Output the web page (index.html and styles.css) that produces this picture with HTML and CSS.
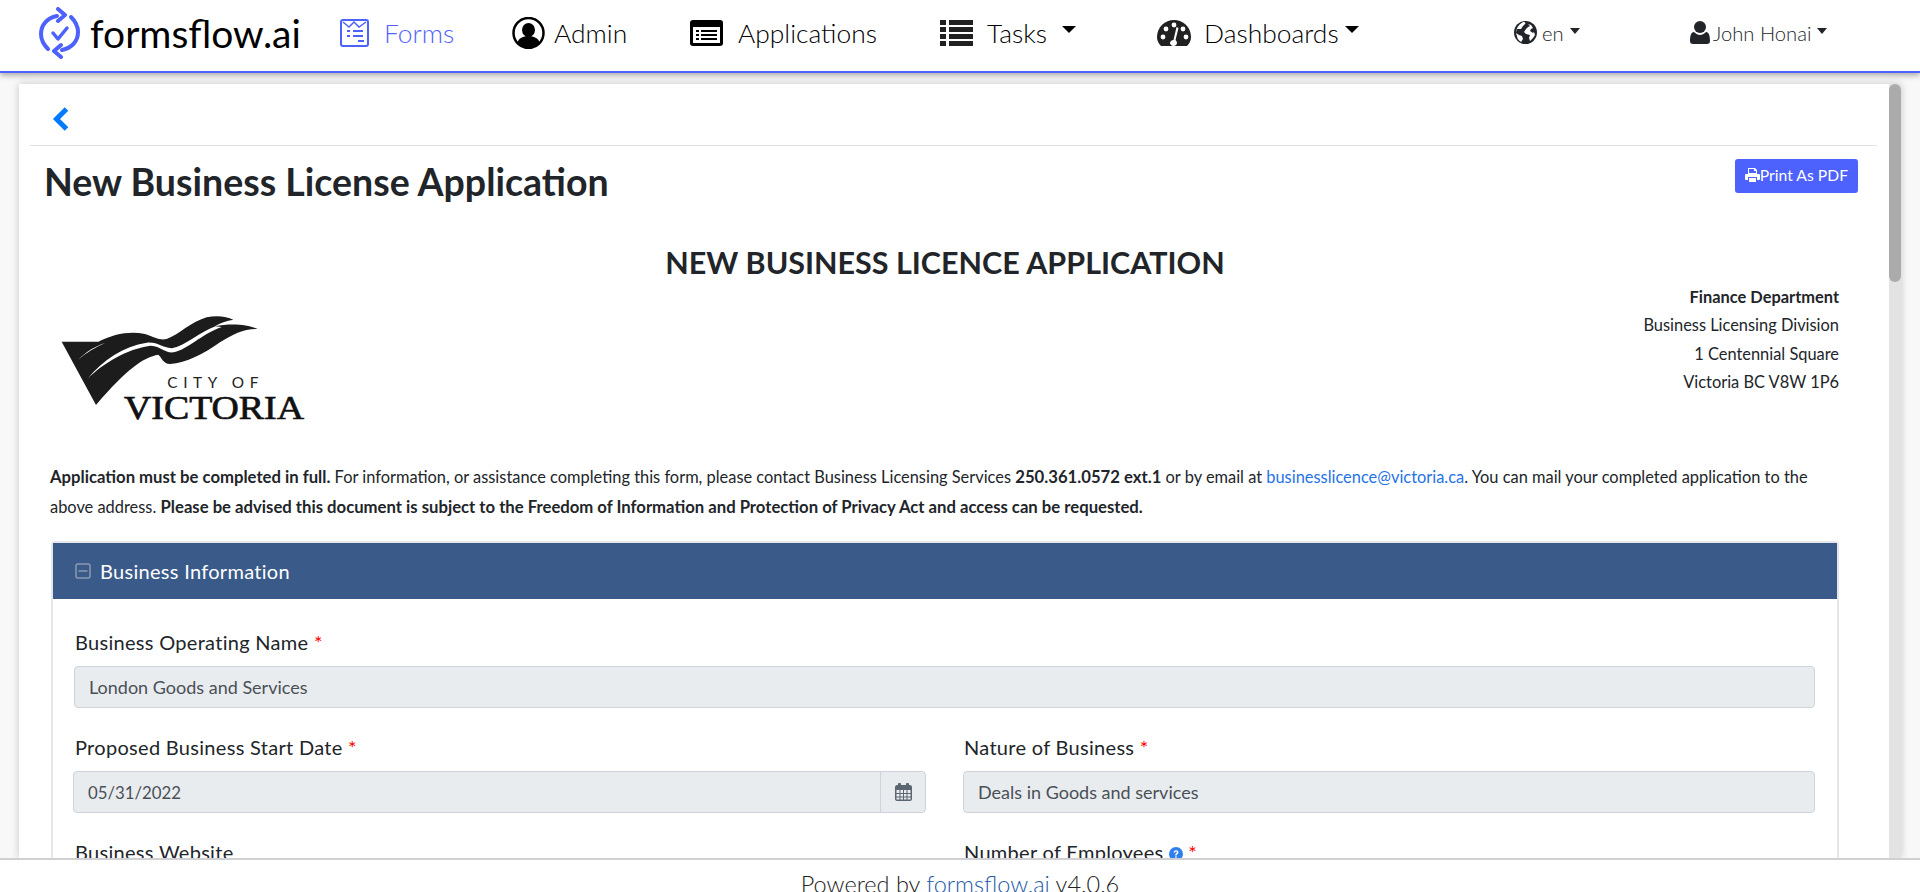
FILE: index.html
```html
<!DOCTYPE html>
<html lang="en">
<head>
  <meta charset="UTF-8">
  <meta name="viewport" content="width=device-width, initial-scale=1">
  <title>New Business License Application</title>
  <link rel="stylesheet" href="styles.css">
</head>
<body>
<div class="page">

  <header class="topbar">
    <a class="brand">
      <svg class="brand-icon" viewBox="0 0 43 52" fill="none" stroke="#4d61fc" stroke-width="4" stroke-linecap="round" stroke-linejoin="round">
        <path d="M19 9C9 11 3 18 3 27c0 6 3 11 7 15"/>
        <path d="M20 2l7 6-7 6" />
        <path d="M24 43c10-2 16-9 16-18 0-6-3-11-7-15"/>
        <path d="M23 50l-7-6 7-6" />
        <path d="M15 26l5 6 9-11" stroke-width="3.5"/>
      </svg>
      <span>formsflow.ai</span>
    </a>

    <a class="nav-item nav-active gap-forms">
      <svg class="ic-forms" viewBox="0 0 29 28" fill="none" stroke="#4d61fc" stroke-width="2">
        <rect x="1" y="1" width="27" height="26" rx="2"/>
        <path d="M3 3l6 5 5-5 5 5 7-5" stroke-width="1.5"/>
        <path d="M7 12h3M13 12h10M7 17h3M13 17h10M18 22h6" stroke-width="2"/>
      </svg>
      <span>Forms</span>
    </a>

    <a class="nav-item gap-admin">
      <svg class="ic-admin" viewBox="0 0 33 32">
        <ellipse cx="16.500" cy="16" rx="15" ry="15" fill="#fff" stroke="#000" stroke-width="2.500"/>
        <ellipse cx="16.500" cy="13" rx="6.500" ry="7"/>
        <path d="M5 26c2-5 6-7 11.500-7S26 21 28 26c-3 3-7 5-11.500 5S8 29 5 26z"/>
      </svg>
      <span>Admin</span>
    </a>

    <a class="nav-item gap-apps">
      <svg class="ic-apps" viewBox="0 0 33 26">
        <rect x="0" y="0" width="33" height="26" rx="3"/>
        <rect x="3" y="7" width="27" height="16" fill="#fff"/>
        <path d="M6 10h3v2H6zM11 10h16v2H11zM6 14h3v2H6zM11 14h16v2H11zM6 18h3v2H6zM11 18h16v2H11z"/>
      </svg>
      <span>Applications</span>
    </a>

    <a class="nav-item gap-tasks">
      <svg class="ic-tasks" viewBox="0 0 33 26" fill="#212121">
        <path d="M0 0h6v5H0zM9 0h24v5H9zM0 7h6v5H0zM9 7h24v5H9zM0 14h6v5H0zM9 14h24v5H9zM0 21h6v5H0zM9 21h24v5H9z"/>
      </svg>
      <span>Tasks</span>
      <i class="caret caret-big caret-tasks"></i>
    </a>

    <a class="nav-item gap-dash">
      <svg class="ic-dash" viewBox="0 0 34 26">
        <path d="M4 26C1 23 0 20 0 17 0 7 8 0 17 0s17 7 17 17c0 3-1 6-4 9z" fill="#212121"/>
        <circle cx="6" cy="17" r="2.400" fill="#fff"/>
        <circle cx="9" cy="9" r="2.400" fill="#fff"/>
        <circle cx="17" cy="5" r="2.400" fill="#fff"/>
        <circle cx="26" cy="9" r="2.400" fill="#fff"/>
        <circle cx="29" cy="17" r="2.400" fill="#fff"/>
        <path d="M19.500 7l2 1-3 12c1 1 1.500 2 1.500 3 0 1.500-1.500 3-3.500 3s-3.500-1.500-3.500-3 1.500-3 3.500-3z" fill="#fff"/>
      </svg>
      <span>Dashboards</span>
      <i class="caret caret-big"></i>
    </a>

    <a class="nav-item nav-small gap-lang">
      <svg class="ic-globe" viewBox="0 0 23 23">
        <circle cx="11.500" cy="11.500" r="11.500" fill="#212529"/>
        <path d="M9 1c2 0 3 1 2 2L9 5 7 8 3 8 2 12l3 2 3 1 1 3-2 3C4 19 3 17 3 15 1 12 2 5 9 1zM14 3l3 1 2 3-2 1-1 2 3 2 1-1 1 3-2 3-3 3-1-3 1-3-4-1-2-2 2-3 2-2 2-1z" fill="#fff"/>
      </svg>
      <span>en</span>
      <i class="caret"></i>
    </a>

    <a class="nav-item nav-small gap-user">
      <svg class="ic-user" viewBox="0 0 20 23" fill="#212529">
        <circle cx="10" cy="6" r="6"/>
        <path d="M0 20c0-5 1-9 4-9 2 2 4 3 6 3s4-1 6-3c3 0 4 4 4 9 0 2-1 3-3 3H3c-2 0-3-1-3-3z"/>
      </svg>
      <span>John Honai</span>
      <i class="caret"></i>
    </a>
  </header>

  <main class="main">
    <div class="card">
      <div class="content">
        <div class="back-row">
          <svg class="back-icon" viewBox="0 0 16 24" fill="none" stroke="#007bff" stroke-width="5">
            <path d="M14 2L4 12l10 10"/>
          </svg>
        </div>

        <div class="title-row">
          <h1>New Business License Application</h1>
          <button class="btn-print">
            <svg class="ic-print" viewBox="0 0 15 14" fill="#fff">
              <path d="M3 0h7l2 2v4H3zM4 1v4h7V3H9V1zM0 7c0-1 1-1 1-1h13s1 0 1 1v4c0 .5-.5 1-1 1h-2V9H3v3H1c-.5 0-1-.5-1-1zM4 10h7v4H4z"/>
            </svg>Print As PDF
          </button>
        </div>

        <div class="form-area">
          <h2>NEW BUSINESS LICENCE APPLICATION</h2>

          <div class="letterhead">
            <svg class="city-logo" viewBox="0 0 960 450">
              <path d="M95 158L205 158C250 135 300 125 345 135C375 145 390 155 410 150C450 135 480 100 530 85C560 78 590 82 610 92C590 95 570 102 555 112C600 102 655 106 683 120C640 120 610 135 570 160C520 195 470 222 420 225C400 225 395 205 385 197C340 205 290 240 198 348Z" fill="#1c1c1c"/>
              <path d="M172 270C220 222 290 180 362 170C395 172 405 194 432 190C475 180 510 138 575 114L556 112C510 128 465 172 425 178C395 176 385 158 350 161C280 172 220 212 172 270Z" fill="#fff"/>
              <path d="M145 212C170 190 195 176 225 162C195 172 168 188 145 212Z" fill="#fff"/>
              <text class="logo-city" x="412" y="298" textLength="273">CITY OF</text>
              <text class="logo-victoria" x="282" y="390" textLength="540" lengthAdjust="spacingAndGlyphs">VICTORIA</text>
            </svg>
            <address class="dept">
              <strong>Finance Department</strong>
              <span>Business Licensing Division</span>
              <span>1 Centennial Square</span>
              <span>Victoria BC V8W 1P6</span>
            </address>
          </div>

          <p class="intro">
            <strong>Application must be completed in full.</strong> For information, or assistance completing this form, please contact Business Licensing Services <strong>250.361.0572 ext.1</strong> or by email at <a href="#">businesslicence@victoria.ca</a>. You can mail your completed application to the above address. <strong>Please be advised this document is subject to the Freedom of Information and Protection of Privacy Act and access can be requested.</strong>
          </p>

          <section class="panel">
            <div class="panel-head">
              <svg class="ic-minus" viewBox="0 0 16 16" fill="none" stroke="#8a9ab3" stroke-width="1.500">
                <rect x="1" y="1" width="14" height="14" rx="2"/>
                <path d="M3.500 8h9"/>
              </svg>
              Business Information
            </div>
            <div class="panel-body">
              <div class="field field-wide">
                <label>Business Operating Name <b>*</b></label>
                <div class="input">London Goods and Services</div>
              </div>
              <div class="field">
                <label>Proposed Business Start Date <b>*</b></label>
                <div class="input input-date">
                  <span class="date-value">05/31/2022</span>
                  <span class="addon">
                    <svg class="ic-cal" viewBox="0 0 17 18" fill="#5b6670">
                      <path d="M0 4c0-1 1-2 2-2h1V1c0-.5.500-1 1-1h1c.5 0 1 .5 1 1v1h5V1c0-.5.500-1 1-1h1c.5 0 1 .5 1 1v1h1c1 0 2 1 2 2v12c0 1-1 2-2 2H2c-1 0-2-1-2-2zM1.500 7v3h3V7zm4 0v3h2.500V7zm3.500 0v3h2.500V7zm3.500 0v3h3V7zm-11 4v2.500h3V11zm4 0v2.500h2.500V11zm3.500 0v2.500h2.500V11zm3.500 0v2.500h3V11zm-11 3.500v2h3v-2zm4 0v2h2.500v-2zm3.500 0v2h2.500v-2zm3.500 0v2h3v-2z"/>
                    </svg>
                  </span>
                </div>
              </div>
              <div class="field">
                <label>Nature of Business <b>*</b></label>
                <div class="input">Deals in Goods and services</div>
              </div>
              <div class="field">
                <label>Business Website</label>
                <div class="input"></div>
              </div>
              <div class="field">
                <label>Number of Employees
                  <svg class="ic-help" viewBox="0 0 14 14">
                    <circle cx="7" cy="7" r="7" fill="#2f80ed"/>
                    <path d="M4.600 5.400C4.800 4 5.800 3.200 7.100 3.200c1.400 0 2.400.9 2.400 2 0 1.800-1.800 1.700-1.800 3.200H6.200c0-2.200 1.800-2.200 1.800-3.100 0-.5-.4-.8-.9-.8-.6 0-1 .4-1.100 1zM6.200 9.300h1.500v1.500H6.200z" fill="#fff"/>
                  </svg>
                  <b>*</b></label>
                <div class="input"></div>
              </div>
            </div>
          </section>
        </div>
      </div>

      <div class="scrollbar"><div class="scroll-thumb"></div></div>
    </div>
  </main>

  <footer class="footer">
    Powered by <a href="#">formsflow.ai</a> v4.0.6
  </footer>

</div>
</body>
</html>
```

FILE: styles.css
```css
* { box-sizing: border-box; margin: 0; padding: 0; }

body {
  font-family: 'Lato', 'Open Sans', sans-serif;
  background: #f8f8f8;
  color: #212529;
  overflow: hidden;
}

a { text-decoration: none; }

.page {
  display: flex;
  flex-direction: column;
  height: 100vh;
  overflow: hidden;
}

/* Barra superior */
.topbar {
  position: relative;
  z-index: 2;
  flex: none;
  display: grid;
  grid-template-columns: 340px 172px 178px 250px 217px 357px 176px 1fr;
  align-items: center;
  height: 73px;
  padding-bottom: 6px;
  background: #fff;
  border-bottom: 2px solid #4d61fc;
  box-shadow: 0 2px 6px rgba(0,0,0,0.35);
}

.brand {
  display: flex;
  align-items: center;
  gap: 9px;
  padding-left: 38px;
  color: #000;
  font-size: 39px;
  font-weight: 400;
}
.brand-icon { width: 43px; height: 52px; }

.nav-item {
  display: flex;
  align-items: center;
  color: #000;
  font-size: 26.4px;
  font-weight: 300;
}
.nav-active { color: #5264fc; }
.nav-small { font-size: 20.2px; color: #212529; }

.gap-forms svg { margin-right: 15px; }
.gap-admin svg { margin-right: 9px; }
.gap-apps svg { margin-right: 15px; }
.gap-tasks svg { margin-right: 14px; }
.gap-dash svg { margin-right: 13px; }
.gap-lang svg { margin-right: 5px; }
.gap-user svg { margin-right: 3px; }

.ic-forms { width: 29px; height: 28px; }
.ic-admin { width: 33px; height: 32px; }
.ic-apps, .ic-tasks { width: 33px; height: 26px; }
.ic-dash { width: 34px; height: 26px; }
.ic-globe { width: 23px; height: 23px; }
.ic-user { width: 20px; height: 23px; }

.caret {
  display: inline-block;
  margin-left: 6px;
  margin-top: -4px;
  border-top: 6px solid currentColor;
  border-left: 5.5px solid transparent;
  border-right: 5.5px solid transparent;
}
.caret-big {
  margin-top: -6px;
  border-top-width: 7px;
  border-left-width: 7.5px;
  border-right-width: 7.5px;
}
.caret-tasks { margin-left: 15px; }

/* Tarjeta principal */
.main {
  flex: 1;
  min-height: 0;
  display: flex;
  padding: 11px 19px 0;
}

.card {
  flex: 1;
  display: flex;
  min-width: 0;
  background: #fff;
  box-shadow: 0 0 8px rgba(0,0,0,0.2);
}

.content {
  flex: 1;
  min-width: 0;
  overflow: hidden;
}

.scrollbar {
  flex: none;
  width: 12px;
  background: #e3e3e3;
}
.scroll-thumb {
  height: 198px;
  background: #ababab;
  border-radius: 6px;
}

.back-row {
  height: 62px;
  margin: 0 12px 0 11px;
  padding: 23px 0 0 22px;
  border-bottom: 1px solid #e2e2e2;
}
.back-icon { display: block; width: 17px; height: 24px; }

.title-row {
  display: flex;
  justify-content: space-between;
  align-items: flex-start;
  margin-top: 13px;
  padding: 0 31px 0 25px;
}
h1 {
  font-size: 37.5px;
  font-weight: 700;
  line-height: 43px;
  margin-top: 1px;
}

.btn-print {
  display: flex;
  align-items: center;
  height: 34px;
  padding: 0 10px 3px;
  border: none;
  border-radius: 3px;
  background: #4d61fc;
  color: #fff;
  font-family: inherit;
  font-size: 15.7px;
}
.ic-print { width: 15px; height: 14px; }

.form-area {
  width: 1820px;
  padding-left: 11px;
}

h2 {
  margin-top: 41px;
  padding-left: 21px;
  font-size: 30.5px;
  line-height: 36px;
  font-weight: 700;
  text-align: center;
}

.letterhead {
  display: flex;
  justify-content: space-between;
  align-items: flex-start;
  margin-top: 1px;
}
.city-logo { display: block; width: 320px; height: 150px; margin-top: 8px; }
.logo-city {
  font-family: 'Lato', sans-serif;
  font-size: 46px;
  fill: #222;
}
.logo-victoria {
  font-family: 'Liberation Serif', serif;
  font-size: 98px;
  fill: #111;
  stroke: #111;
  stroke-width: 2;
}

.dept {
  display: flex;
  flex-direction: column;
  padding-top: 2px;
  font-style: normal;
  font-size: 16.4px;
  line-height: 28.4px;
  text-align: right;
}

.intro {
  margin-top: 23px;
  padding-left: 20px;
  font-size: 16.4px;
  line-height: 30px;
}
.intro strong { font-size: 16.7px; }
.intro a { color: #1f73e6; }

.panel {
  margin-top: 19px;
  margin-left: 21px;
  border: 2px solid #e6e6ea;
  border-bottom: none;
  border-radius: 4px 4px 0 0;
}
.panel-head {
  display: flex;
  align-items: center;
  gap: 9px;
  height: 56px;
  padding-left: 22px;
  background: #3a5a8a;
  color: #fff;
  font-size: 20px;
  letter-spacing: .3px;
}
.ic-minus { width: 16px; height: 16px; }

.panel-body {
  display: grid;
  grid-template-columns: 1fr 1fr;
  column-gap: 37px;
  row-gap: 26px;
  padding: 30px 22px 0 21px;
}
.field-wide { grid-column: 1 / -1; }

.field label {
  display: block;
  height: 27px;
  padding-left: 1px;
  margin-bottom: 10px;
  font-size: 20px;
  letter-spacing: .3px;
  line-height: 27px;
}
.field label b { color: #f00; font-weight: 400; }
.ic-help { width: 14px; height: 14px; vertical-align: -1px; }

.input {
  display: flex;
  align-items: center;
  height: 42px;
  padding: 0 14px;
  background: #e9ecef;
  border: 1px solid #ced4da;
  border-radius: 4px;
  color: #495057;
  font-size: 18px;
}
.input-date {
  margin-left: -1px;
  padding-right: 0;
  justify-content: space-between;
}
.date-value { font-size: 16.8px; }
.addon {
  display: flex;
  align-items: center;
  justify-content: center;
  width: 45px;
  height: 100%;
  border-left: 1px solid #ced4da;
}
.ic-cal { width: 17px; height: 18px; }

/* Pie */
.footer {
  position: relative;
  z-index: 2;
  flex: none;
  height: 34px;
  overflow: hidden;
  border-top: 2px solid #d0d0d4;
  background: #fff;
  color: #222;
  text-align: center;
  font-size: 23.5px;
  line-height: 48px;
  font-weight: 300;
}
.footer a { color: #1f5aa8; }
```
